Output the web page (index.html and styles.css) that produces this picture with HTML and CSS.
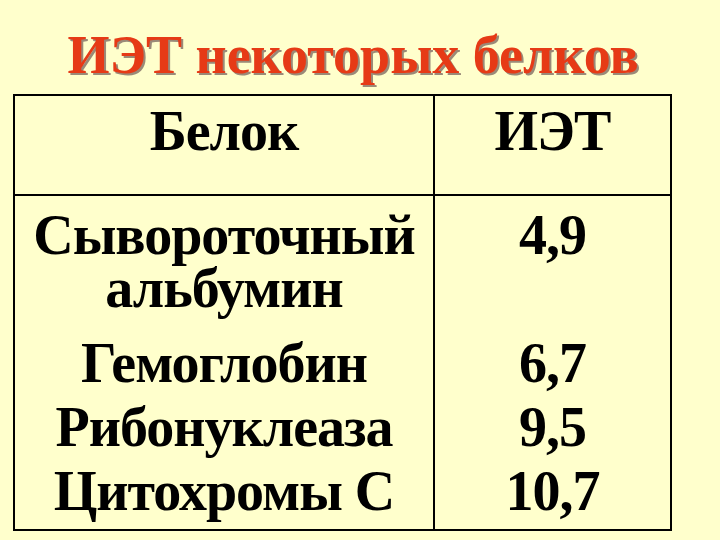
FILE: index.html
```html
<!DOCTYPE html>
<html lang="ru">
<head>
<meta charset="utf-8">
<link rel="stylesheet" href="styles.css">
</head>
<body>
<div class="slide">
  <h1 class="title">ИЭТ некоторых белков</h1>
  <table class="data">
    <thead>
      <tr><th class="col-name">Белок</th><th class="col-val">ИЭТ</th></tr>
    </thead>
    <tbody>
      <tr class="first"><td class="col-name">Сывороточный<br>альбумин</td><td class="col-val">4,9</td></tr>
      <tr class="gap"><td class="col-name">Гемоглобин</td><td class="col-val">6,7</td></tr>
      <tr><td class="col-name">Рибонуклеаза</td><td class="col-val">9,5</td></tr>
      <tr class="last"><td class="col-name">Цитохромы С</td><td class="col-val">10,7</td></tr>
    </tbody>
  </table>
</div>
</body>
</html>
```
FILE: styles.css
```css
html, body {
  margin: 0;
  padding: 0;
  background: #ffffcc;
}
.slide {
  width: 720px;
  height: 540px;
  overflow: hidden;
  font-family: "Liberation Serif", "Times New Roman", serif;
  font-weight: bold;
  color: #000;
}
.title {
  margin: 0;
  padding-top: 24px;
  padding-right: 14px;
  height: 77px;
  box-sizing: border-box;
  text-align: center;
  font-size: 54px;
  line-height: 62px;
  color: #e63a16;
  text-shadow: 2px 2px 0 #9a8a78;
  white-space: nowrap;
}
.data {
  margin-left: 13px;
  margin-top: 17px;
  width: 659px;
  border-collapse: collapse;
  border: 2px solid #000;
  font-size: 56px;
  letter-spacing: -1px;
}
.data th, .data td {
  padding: 0;
  text-align: center;
  vertical-align: top;
  font-weight: bold;
  line-height: 64px;
}
.data .col-name {
  width: 418px;
  border-right: 2px solid #000;
}
.data thead th {
  height: 100px;
  padding-top: 3px;
  box-sizing: border-box;
  border-bottom: 2px solid #000;
}
.data tr.first td {
  line-height: 53px;
  padding-top: 13px;
  padding-bottom: 16px;
}
.data tr.last td {
  padding-bottom: 6px;
}
```
